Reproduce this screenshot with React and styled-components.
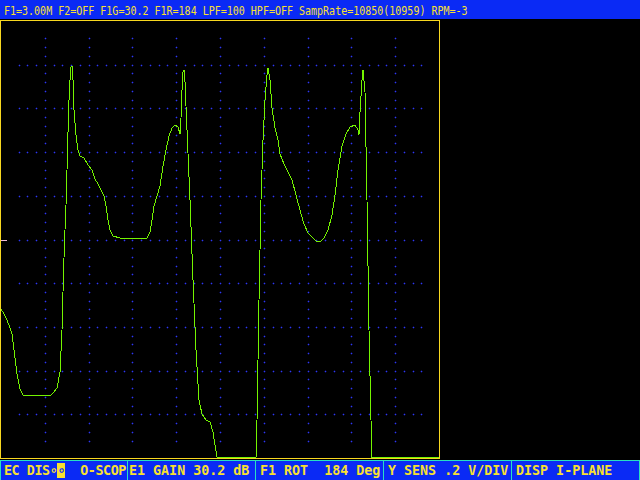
import styled, { createGlobalStyle } from 'styled-components';

const GlobalStyle = createGlobalStyle`
	html, body {
		margin: 0;
		padding: 0;
		background: #000;
	}
`;

const BLUE = '#0a2af5';
const YELLOW = '#f8d820';
const TEXT = '#f8e030';
const CYAN = '#28e0c0';
const TRACE = '#74f400';

const Screen = styled.div`
	width: 640px;
	height: 480px;
	background: #000;
	display: flex;
	flex-direction: column;
	gap: 1px;
	overflow: hidden;
`;

const StatusBar = styled.div`
	height: 19px;
	flex: none;
	background: ${BLUE};
	color: ${TEXT};
	font-family: 'DejaVu Sans Mono', 'Liberation Mono', monospace;
	font-size: 10px;
	line-height: 19px;
	padding-left: 4px;
	white-space: pre;
	overflow: hidden;

	& span {
		display: inline-block;
		transform: scaleY(1.25) translateY(1px);
		transform-origin: center;
	}
`;

const Middle = styled.div`
	height: 439px;
	flex: none;
	display: flex;
`;

const Plot = styled.div`
	width: 440px;
	height: 439px;
	box-sizing: border-box;
	border: 1px solid ${YELLOW};
	overflow: hidden;

	& svg {
		display: block;
	}
`;

const SoftKeys = styled.div`
	height: 20px;
	flex: none;
	display: flex;
	background: ${BLUE};
	border-top: 1px solid ${CYAN};
	box-sizing: border-box;
`;

const Key = styled.div`
	width: 128px;
	flex: none;
	box-sizing: border-box;
	border-right: 1px solid ${CYAN};
	border-left: ${(p) => (p.$first ? `1px solid ${CYAN}` : 'none')};
	padding-left: ${(p) => p.$pad}px;
	color: ${TEXT};
	font-family: 'DejaVu Sans Mono', 'Liberation Mono', monospace;
	font-weight: bold;
	font-size: 13.33px;
	letter-spacing: ${(p) => p.$tight || 0}px;
	line-height: 19px;
	white-space: pre;
	overflow: hidden;
`;

const Cursor = styled.span`
	background: ${TEXT};
	color: ${BLUE};
`;

const X0 = 1;
const Y0 = 21;
const W = 438;
const H = 437;

const dots = [];
for (let k = 1; k < 10; k++) {
	const gx = Math.round(X0 + (W / 10) * k);
	const gy = Math.round(Y0 + (H / 10) * k);
	for (let j = 2; j <= 48; j++) {
		dots.push([gx, Math.round(Y0 + (H / 50) * j)]);
		dots.push([Math.round(X0 + (W / 50) * j), gy]);
	}
}

const trace = [
	[0, 308], [3, 312], [6, 318], [9, 325], [12, 334], [14, 350], [17, 374], [20, 389], [23, 395],
	[50, 396], [53, 393], [57, 388], [60, 372], [62, 330], [63, 292], [64, 258], [65, 230],
	[66, 205], [67, 170], [68, 132], [69, 100], [70, 80], [71, 67], [72, 66], [73, 80], [74, 110],
	[76, 135], [78, 150], [80, 156], [84, 158], [88, 165], [92, 170], [95, 179], [98, 184],
	[101, 190], [104, 196], [106, 206], [108, 220], [110, 230], [113, 236], [120, 238],
	[140, 239], [147, 238], [150, 232], [152, 220], [154, 206], [157, 196], [160, 186],
	[163, 166], [166, 150], [169, 136], [172, 128], [175, 125], [178, 127], [180, 134],
	[181, 118], [182, 90], [183, 72], [184, 70], [185, 82], [187, 130], [190, 200], [193, 280],
	[196, 350], [199, 400], [202, 414], [206, 420], [210, 422], [213, 432], [215, 445],
	[217, 457], [256, 457], [257, 420], [259, 300], [261, 200], [263, 140], [265, 100],
	[267, 75], [268, 68], [270, 80], [272, 108], [275, 128], [278, 140], [280, 154],
	[284, 164], [288, 172], [292, 180], [296, 195], [300, 210], [304, 224], [308, 233],
	[312, 237], [316, 241], [320, 242], [324, 238], [328, 230], [332, 215], [335, 195],
	[338, 170], [342, 146], [346, 134], [350, 127], [355, 125], [358, 130], [359, 135],
	[360, 112], [362, 80], [363, 70], [365, 92], [367, 200], [369, 330], [371, 420],
	[372, 457], [440, 457],
];

const Scope = () => (
	<svg width={W} height={H} viewBox={`${X0} ${Y0} ${W} ${H}`} shapeRendering='crispEdges'>
		{dots.map(([x, y], i) => (
			<g key={i}>
				<rect x={x - 1} y={y} width={3} height={1} fill='#0c0c48' />
				<rect x={x} y={y - 1} width={1} height={3} fill='#0c0c48' />
				<rect x={x} y={y} width={1} height={1} fill='#2c3cf0' />
			</g>
		))}
		<rect x={1} y={240} width={6} height={1} fill='#f0b8d8' />
		<polyline
			points={trace.map((p) => p.join(',')).join(' ')}
			fill='none'
			stroke={TRACE}
			strokeWidth={1}
			strokeLinejoin='miter'
		/>
	</svg>
);

export default function App() {
	return (
		<>
			<GlobalStyle />
			<Screen>
				<StatusBar>
					<span>F1=3.00M F2=OFF F1G=30.2 F1R=184 LPF=100 HPF=OFF SampRate=10850(10959) RPM=-3</span>
				</StatusBar>
				<Middle>
					<Plot>
						<Scope />
					</Plot>
				</Middle>
				<SoftKeys>
					<Key $first $pad={3} $tight={-0.4}>
						EC DIS∘<Cursor>∘</Cursor>  O-SCOP
					</Key>
					<Key $pad={1}>E1 GAIN 30.2 dB</Key>
					<Key $pad={4}>F1 ROT  184 Deg</Key>
					<Key $pad={4}>Y SENS .2 V/DIV</Key>
					<Key $pad={4}>DISP I-PLANE</Key>
				</SoftKeys>
			</Screen>
		</>
	);
}
